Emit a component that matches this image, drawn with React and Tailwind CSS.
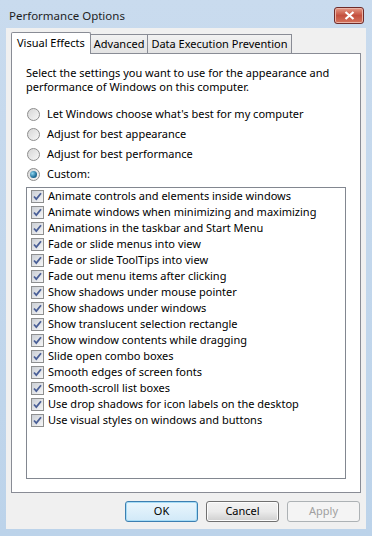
import { useState } from 'react';

const effects = [
  'Animate controls and elements inside windows',
  'Animate windows when minimizing and maximizing',
  'Animations in the taskbar and Start Menu',
  'Fade or slide menus into view',
  'Fade or slide ToolTips into view',
  'Fade out menu items after clicking',
  'Show shadows under mouse pointer',
  'Show shadows under windows',
  'Show translucent selection rectangle',
  'Show window contents while dragging',
  'Slide open combo boxes',
  'Smooth edges of screen fonts',
  'Smooth-scroll list boxes',
  'Use drop shadows for icon labels on the desktop',
  'Use visual styles on windows and buttons',
];

const modes = [
  "Let Windows choose what's best for my computer",
  'Adjust for best appearance',
  'Adjust for best performance',
  'Custom:',
];

function Radio({ checked }) {
  return (
    <span className="relative flex items-center justify-center w-[13px] h-[13px] rounded-full border border-[#8d8d8d] bg-gradient-to-br from-[#d6d6d6] to-[#f7f7f7] shrink-0">
      {checked && (
        <span className="w-[7px] h-[7px] rounded-full bg-[radial-gradient(circle_at_35%_35%,#8fd6f0,#1f6f9a_60%,#174a6b)]" />
      )}
    </span>
  );
}

function Check({ checked }) {
  return (
    <span className="flex items-center justify-center w-[13px] h-[13px] border border-[#8e8f8f] bg-white shrink-0">
      <span className="flex items-center justify-center w-[11px] h-[11px] bg-gradient-to-br from-[#cbcfd5] to-[#f6f6f6]">
        {checked && (
          <svg width="9" height="9" viewBox="0 0 9 9">
            <path d="M1 4.5 L3.3 7 L8 1.2" fill="none" stroke="#4a5f97" strokeWidth="1.8" />
          </svg>
        )}
      </span>
    </span>
  );
}

function Button({ children, primary, disabled }) {
  let cls = 'w-[73px] h-[21px] rounded-[3px] text-[11px] flex items-center justify-center ';
  if (disabled) cls += 'border border-[#adb2b5] bg-[#f4f4f4] text-[#a0a0a0]';
  else if (primary) cls += 'border border-[#3c7fb1] bg-gradient-to-b from-[#eaf6fd] to-[#d1e9f8] text-black shadow-[inset_0_0_0_1px_#a6dcf6]';
  else cls += 'border border-[#707070] bg-gradient-to-b from-[#f2f2f2] via-[#ebebeb] to-[#cfcfcf] text-black shadow-[inset_0_0_0_1px_#fcfcfc]';
  return (
    <button type="button" className={cls} disabled={disabled}>
      {children}
    </button>
  );
}

export default function App() {
  const [mode, setMode] = useState(3);
  const [tab, setTab] = useState(0);
  const tabs = ['Visual Effects', 'Advanced', 'Data Execution Prevention'];

  return (
    <div
      className="w-[372px] h-[536px] flex flex-col px-[6px] pb-[7px] bg-gradient-to-b from-[#c9dbee] to-[#bcd3ea] text-black"
      style={{ fontFamily: '"Noto Sans", "Liberation Sans", sans-serif' }}
    >
      {/* title bar */}
      <div className="h-[28px] flex items-start justify-between">
        <span className="pl-[3px] pt-[7px] text-[11.5px] text-[#1e1e1e]">Performance Options</span>
        <button
          type="button"
          className="mt-[7px] mr-[2px] w-[30px] h-[17px] rounded-[3px] border border-[#6e2c2a] bg-gradient-to-b from-[#e59a87] via-[#c4503f] to-[#d4735c] flex items-center justify-center shadow-[inset_0_0_0_1px_#eab3a6]"
        >
          <svg width="11" height="9" viewBox="0 0 11 9">
            <path d="M1.5 1 L9.5 8 M9.5 1 L1.5 8" stroke="#ffffff" strokeWidth="2.2" />
          </svg>
        </button>
      </div>

      {/* client area */}
      <div className="flex-1 flex flex-col bg-[#f0f0f0] px-[5px] pt-[4px]">
        <div className="flex items-end h-[21px]">
          {tabs.map((t, i) => (
            <div
              key={t}
              onClick={() => setTab(i)}
              className={
                i === tab
                  ? 'relative z-10 h-[22px] -mb-px px-[5px] bg-white border border-b-0 border-[#898c95] text-[11px] flex items-center rounded-t-[2px]'
                  : 'h-[19px] px-[3px] -ml-px bg-gradient-to-b from-[#f2f2f2] to-[#e3e3e3] border border-b-0 border-[#898c95] text-[11px] flex items-center'
              }
            >
              {t}
            </div>
          ))}
        </div>

        <div className="h-[440px] bg-white border border-[#898c95] px-[14px] pt-[12px]">
          <p className="text-[11px] leading-[14px]">
            Select the settings you want to use for the appearance and performance of Windows on this computer.
          </p>

          <div className="mt-[13px] flex flex-col gap-[5px]">
            {modes.map((m, i) => (
              <label key={m} className="flex items-center gap-[7px] h-[15px] pl-[1px] text-[11px]" onClick={() => setMode(i)}>
                <Radio checked={mode === i} />
                <span>{m}</span>
              </label>
            ))}
          </div>

          <div className="mt-[5px] h-[292px] border border-[#828790] pl-[4px]">
            {effects.map((e) => (
              <div key={e} className="h-[16px] flex items-center gap-[4px] text-[11px]">
                <Check checked />
                <span>{e}</span>
              </div>
            ))}
          </div>
        </div>

        <div className="flex justify-end gap-[8px] pt-[8px] pr-[1px]">
          <Button primary>OK</Button>
          <Button>Cancel</Button>
          <Button disabled>Apply</Button>
        </div>
      </div>
    </div>
  );
}
